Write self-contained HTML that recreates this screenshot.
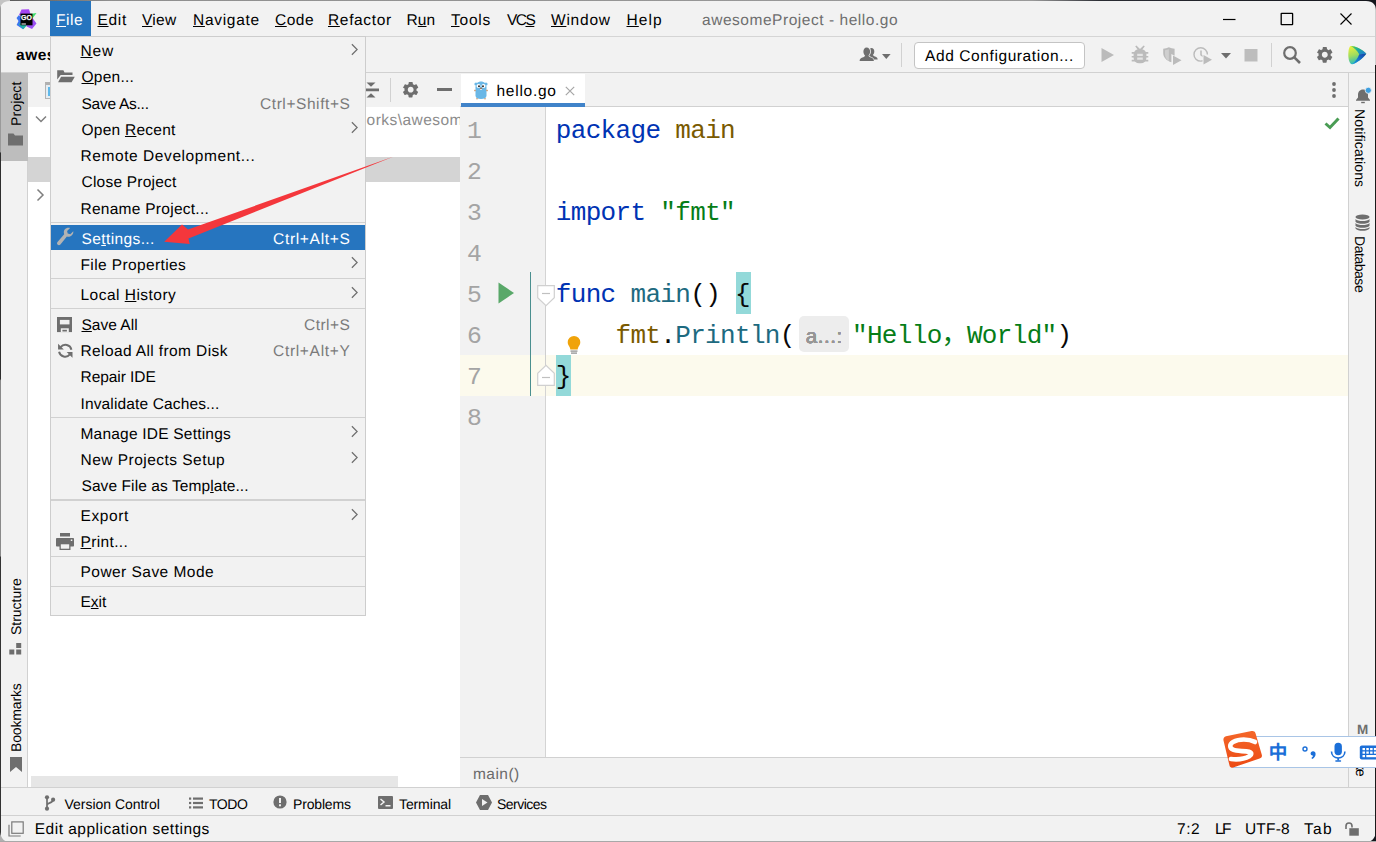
<!DOCTYPE html>
<html><head><meta charset="utf-8">
<style>
*{box-sizing:border-box;margin:0;padding:0}
html,body{width:1376px;height:842px;overflow:hidden;background:#f2f2f2}
body{font-family:"Liberation Sans","Noto Sans CJK SC",sans-serif;font-size:15.5px;color:#000;position:relative}
.abs{position:absolute}
svg{position:absolute;overflow:visible}
u{text-decoration:underline;text-underline-offset:1px;text-decoration-thickness:1px}
.t{position:absolute;line-height:20px;white-space:nowrap;text-rendering:geometricPrecision}
#menubar{left:0;top:0;width:1376px;height:37px;background:#f2f2f2;border-bottom:1px solid #d5d5d5}
#filehl{left:50px;top:1px;width:41px;height:35px;background:#2675bf}
#toolbar{left:0;top:37px;width:1376px;height:36px;background:#f2f2f2;border-bottom:1px solid #d1d1d1}
#leftstrip{left:0;top:73px;width:28px;height:714px;background:#f2f2f2;border-right:1px solid #d1d1d1}
#projtab{left:1px;top:73px;width:27px;height:88px;background:#bdbdbd}
#rightstrip{left:1348px;top:73px;width:28px;height:714px;background:#f2f2f2;border-left:1px solid #d1d1d1}
#project{left:28px;top:73px;width:432px;height:714px;background:#fff}
#projhead{left:28px;top:73px;width:432px;height:34px;background:#f2f2f2}
#projsel{left:28px;top:157px;width:432px;height:25px;background:#d4d4d4}
#hscroll{left:31px;top:776px;width:367px;height:11px;background:#e6e6e6}
#tabs{left:460px;top:73px;width:888px;height:34px;background:#f2f2f2;border-bottom:1px solid #d1d1d1}
#tab{left:461px;top:74px;width:124px;height:33px;background:#fff;border-bottom:4px solid #4083c9}
#editor{left:461px;top:107px;width:887px;height:651px;background:#fff}
#curline{left:461px;top:355px;width:887px;height:41px;background:#fcfaed}
#gutter{left:460px;top:107px;width:86px;height:651px;background:#f2f2f2;border-right:1px solid #d4d4d4}
#crumb{left:460px;top:757px;width:888px;height:30px;background:#f2f2f2;border-top:1px solid #d1d1d1}
#bottomstrip{left:0;top:787px;width:1376px;height:28px;background:#f2f2f2;border-top:1px solid #d1d1d1}
#status{left:0;top:815px;width:1376px;height:27px;background:#f2f2f2;border-top:1px solid #d1d1d1}
.code{position:absolute;left:555.8px;font-family:"Liberation Mono","Noto Sans CJK SC",monospace;font-size:26px;letter-spacing:-0.67px;line-height:41px;white-space:pre;color:#080808}
.ln{position:absolute;left:467px;font-family:"Liberation Mono",monospace;font-size:24.7px;line-height:41px;color:#a4a4a4}
.kw{color:#0033b3}.pk{color:#7a5a00}.st{color:#067d17}.fn{color:#1d6a80}
.bh{background:#93d9d9}
#menu{left:50px;top:36px;width:316px;height:579.70px;background:#f2f2f2;border:1px solid #cdcdcd}
#menu .it{position:absolute;left:0;width:314px;height:26.25px}
#menu .sep{position:absolute;left:0;width:314px;height:1.3px;background:#d1d1d1}
#menu .it.sel{background:#2675bf;height:25px}
#menu .arr{left:300px;top:5px;width:7px;height:13px}
.vt{position:absolute;white-space:nowrap;font-size:14px;line-height:16px;transform-origin:0 0}
</style></head><body>
<div class="abs" id="menubar"></div>
<div class="abs" id="filehl"></div>
<div class="abs" id="toolbar"></div>
<div class="abs" id="project"></div>
<div class="abs" id="projhead"></div>
<div class="abs" id="projsel"></div>
<div class="abs" id="hscroll"></div>
<div class="abs" id="leftstrip"></div>
<div class="abs" id="projtab"></div>
<div class="abs" id="rightstrip"></div>
<div class="abs" id="tabs"></div>
<div class="abs" id="tab"></div>
<div class="abs" id="editor"></div>
<div class="abs" id="curline"></div>
<div class="abs" id="gutter"></div>
<div class="abs" id="curline2" style="left:460px;top:355px;width:85px;height:41px;background:#fcfaed"></div>
<div class="abs" id="crumb"></div>
<div class="abs" id="bottomstrip"></div>
<div class="abs" id="status"></div>
<!--EDITOR-->
<div class="ln" style="top:111.3px">1</div>
<div class="ln" style="top:152.3px">2</div>
<div class="ln" style="top:193.3px">3</div>
<div class="ln" style="top:234.3px">4</div>
<div class="ln" style="top:275.3px">5</div>
<div class="ln" style="top:316.3px">6</div>
<div class="ln" style="top:357.3px">7</div>
<div class="ln" style="top:398.3px">8</div>
<div class="abs bh" style="left:736px;top:272px;width:15px;height:42px"></div>
<div class="abs bh" style="left:556px;top:355px;width:15px;height:41px"></div>
<div class="code" style="top:111.1px"><span class="kw">package</span> <span class="pk">main</span></div>
<div class="code" style="top:193.1px"><span class="kw">import</span> <span class="st">"fmt"</span></div>
<div class="code" style="top:275.1px"><span class="kw">func</span> <span class="fn">main</span>() {</div>
<div class="code" style="top:316.1px;left:615.5px"><span class="pk">fmt</span>.<span class="fn">Println</span>(</div>
<div class="abs" style="left:798.5px;top:316px;width:50px;height:36px;background:#ededed;border-radius:5px"></div>
<div class="code" style="top:316.1px;left:852px"><span class="st">"Hello，World"</span>)</div>
<div class="code" style="top:357.1px">}</div>
<!-- window frame bits -->
<div class="abs" style="left:0;top:0;width:1376px;height:1px;background:linear-gradient(90deg,#555 0,#8f8f8f 8%,#9a9a9a 75%,#2a2c33 80%,#14161c 100%)"></div>
<div class="abs" style="left:0;top:0;width:1px;height:842px;background:linear-gradient(180deg,#9a9a9a 0,#9a9a9a 18%,#2e2e2e 18.200%,#2e2e2e 45%,#8a8a8a 45.200%,#8a8a8a 66%,#333 66.200%,#333 100%)"></div>
<div class="abs" style="left:1375px;top:0;width:1px;height:842px;background:linear-gradient(180deg,#cfcfcf 0,#cfcfcf 65px,#1a1a1a 65px,#1a1a1a 100%)"></div>
<svg style="left:1366px;top:0" width="10" height="10" viewBox="0 0 10 10"><path d="M0 0h10v10c0-5-3-9-10-9z" fill="#14161c"/></svg>
<svg style="left:0;top:0" width="10" height="10" viewBox="0 0 10 10"><path d="M10 0h-10v10c0-5 3-9 10-9z" fill="#c4c4c4"/></svg>
<svg style="left:0;top:832px" width="10" height="10" viewBox="0 0 10 10"><path d="M0 0v10h10c-5 0-9-3-10-10z" fill="#b0b0b0"/></svg>
<svg style="left:1366px;top:832px" width="10" height="10" viewBox="0 0 10 10"><path d="M10 0v10h-10c5 0 9-3 10-10z" fill="#14161c"/></svg>
<div class="abs" style="left:0;top:841px;width:1376px;height:1px;background:#a8a8a8"></div>
<!-- GoLand logo -->
<svg style="left:15.5px;top:8.5px" width="21" height="21" viewBox="0 0 21 21">
<polygon points="5.5,0.5 13,0.3 14.5,5 9,8 3,6" fill="#a445f2"/>
<polygon points="3,6 0.5,9 2.5,12 0.6,16 7,20.2 10,16 6,10" fill="#3d74f0"/>
<polygon points="14,5 20.5,4 16.5,9.5 13,9" fill="#3fe06a"/>
<polygon points="16.5,9 20.5,14.5 16,20 10.5,17.5 12,10" fill="#9b52f3"/>
<polygon points="2.5,15 7.5,20.3 11,16 7,13" fill="#1fb3a3"/>
<rect x="4.5" y="4.6" width="12" height="11.7" fill="#000"/>
<rect x="5.500" y="14.500" width="4.400" height="1" fill="#fff"/>
<text x="5.100" y="10.500" font-family="Liberation Sans,sans-serif" font-weight="700" font-size="6.800" fill="#fff" stroke="#fff" stroke-width=".25" textLength="10.800" lengthAdjust="spacingAndGlyphs">GO</text>
</svg>
<!-- window controls -->
<svg style="left:1224px;top:12px" width="130" height="14" viewBox="0 0 130 14">
<path d="M-1 7.500H11.500" stroke="#000" stroke-width="1.200" fill="none"/>
<rect x="57.200" y="1.300" width="11.400" height="11.400" rx=".4" stroke="#000" stroke-width="1.300" fill="none"/>
<path d="M116.5 1.5 L127.5 12.5 M127.5 1.5 L116.5 12.5" stroke="#000" stroke-width="1.1" fill="none"/>
</svg>
<!-- toolbar: user icon -->
<svg style="left:859px;top:46px" width="33" height="18" viewBox="0 0 33 18">
<path d="M7.5 1.5c2.3 0 3.6 1.8 3.6 4 0 1.700-.7 3.100-1.600 3.900.2 1.100 1.200 1.600 2.600 2.100 1.700.6 2.600 1.300 2.800 3.500H.6c.2-2.200 1.100-2.900 2.800-3.500 1.400-.5 2.400-1 2.600-2.100C5.100 8.600 4.400 7.200 4.400 5.500c0-2.200 1.300-4 3.100-4z" fill="#6e6e6e"/>
<path d="M12.300 2c1.900 0 3 1.500 3 3.400 0 1.400-.6 2.600-1.400 3.300.2.900 1 1.400 2.200 1.800 1.500.5 2.400 1.100 2.600 3h-3.600c-.5-1.600-1.600-2.200-3.200-2.800-.9-.3-1.500-.6-1.700-1.100 1.100-1 1.700-2.500 1.700-4.200 0-1.100-.3-2.100-.8-2.900.4-.3.800-.5 1.200-.5z" fill="#6e6e6e"/>
<path d="M23 8 h8.600 l-4.300 5z" fill="#6e6e6e"/>
</svg>
<div class="abs" style="left:901px;top:43px;width:1px;height:24px;background:#d1d1d1"></div>
<div class="abs" style="left:914px;top:41.500px;width:170.500px;height:27px;background:#fff;border:1px solid #c4c4c4;border-radius:4px"></div>
<!-- run -->
<svg style="left:1100px;top:44px" width="170" height="22" viewBox="0 0 170 22">
<path d="M1.5 4 L14 11 L1.5 18z" fill="#bbb"/>
<!-- bug -->
<g fill="#bbb"><path d="M35.200 2.300l1.200-.8 3.600 3.600 3.600-3.600 1.200.8-2.600 3.400h-4.400z"/><rect x="33.600" y="5" width="12.800" height="14.300" rx="5.500"/>
<path d="M31.700 8h16.600v1.700h-16.600zM31.700 11.900h16.600v1.700h-16.600zM31.700 15.800h16.600v1.700h-16.600z"/></g>
<path d="M37.200 9.700h5.600v2.200h-5.600zM37.200 13.600h5.600v2.200h-5.600z" fill="#e4e4e4"/>
<!-- coverage -->
<g fill="#bbb"><path d="M63.200 4.800c2-.2 4-.8 5.700-1.600 1.700.8 3.700 1.400 5.700 1.600v7l-3.200-1.800v8.300c-4.500-1.500-8.200-4.600-8.200-9.300z"/><path d="M73 11.500l8.500 4.700-8.500 4.700z"/></g>
<path d="M68.900 5.300v11.500c-2.300-1.300-3.900-3.500-3.900-6.800v-3.700c1.400-.2 2.700-.5 3.900-1z" fill="#cfcfcf"/>
<!-- profiler -->
<g><circle cx="100.700" cy="10.400" r="6.700" fill="none" stroke="#bbb" stroke-width="1.400"/><path d="M101 6.500v4.300l2.600 2" stroke="#bbb" stroke-width="1.500" fill="none"/><rect x="102.500" y="10.500" width="10" height="11" fill="#f2f2f2"/><path d="M103.500 11l8.500 4.800-8.500 4.800z" fill="#bbb"/></g>
<path d="M121 9h10l-5 5.500z" fill="#6e6e6e"/>
<rect x="144.500" y="5" width="13" height="12.500" fill="#bdbdbd"/>
</svg>
<div class="abs" style="left:1271px;top:43px;width:1px;height:24px;background:#d1d1d1"></div>
<!-- search -->
<svg style="left:1282px;top:45px" width="20" height="20" viewBox="0 0 20 20"><circle cx="8" cy="8" r="5.800" fill="none" stroke="#6e6e6e" stroke-width="2.200"/><path d="M12.300 12.300L18 18" stroke="#6e6e6e" stroke-width="2.600"/></svg>
<!-- gear (toolbar) -->
<svg style="left:1315.200px;top:45.200px" width="19.600" height="19.600" viewBox="0 0 24 24"><path fill="#6e6e6e" d="M19.140 12.940c.04-.3.060-.61.060-.94 0-.32-.02-.64-.07-.94l2.030-1.580a.49.49 0 0 0 .12-.61l-1.920-3.320a.488.488 0 0 0-.59-.22l-2.390.96c-.5-.38-1.030-.7-1.620-.94l-.36-2.540a.484.484 0 0 0-.48-.41h-3.840c-.24 0-.43.170-.47.410l-.36 2.540c-.59.240-1.130.57-1.620.94l-2.390-.96c-.22-.08-.47 0-.59.220L2.740 8.870c-.12.210-.8.470.12.610l2.030 1.580c-.5.300-.9.630-.9.940s.2.640.7.940l-2.030 1.580a.49.49 0 0 0-.12.610l1.920 3.320c.12.220.37.290.59.220l2.390-.96c.5.380 1.030.7 1.620.94l.36 2.540c.5.240.24.410.48.410h3.840c.24 0 .44-.17.470-.41l.36-2.540c.59-.24 1.130-.56 1.620-.94l2.390.96c.22.080.47 0 .59-.22l1.920-3.320c.12-.22.070-.47-.12-.61l-2.010-1.580zM12 15.600c-1.980 0-3.600-1.620-3.600-3.600s1.620-3.600 3.600-3.600 3.600 1.620 3.600 3.600-1.620 3.600-3.600 3.600z"/></svg>
<!-- toolbox logo -->
<svg style="left:1347.500px;top:45px" width="19" height="20" viewBox="0 0 19 20">
<defs><linearGradient id="tg1" x1="0" y1="0" x2=".3" y2="1"><stop offset="0" stop-color="#f6f13a"/><stop offset=".55" stop-color="#9fdc5e"/><stop offset="1" stop-color="#22b8c4"/></linearGradient>
<linearGradient id="tg2" x1="0" y1="0" x2="1" y2=".6"><stop offset="0" stop-color="#5fd24a"/><stop offset=".5" stop-color="#1fae9a"/><stop offset="1" stop-color="#1c84cc"/></linearGradient>
<linearGradient id="tg3" x1="0" y1="1" x2="1" y2="0"><stop offset="0" stop-color="#1ba0dc"/><stop offset=".6" stop-color="#1565c4"/><stop offset="1" stop-color="#173fa4"/></linearGradient></defs>
<path d="M2.800 1C7 1 15 4.500 18.300 8.800 15 13.500 8 18.500 4.200 19.200 1.500 19.500.3 14 .3 10 .3 6 1 1.200 2.800 1z" fill="url(#tg1)"/>
<path d="M2.800 1C7 1 15 4.500 18.300 8.800L11.200 9.300C9.500 6 6 2.500 2.800 1z" fill="url(#tg2)"/>
<path d="M11.200 9.300L18.300 8.800C15 13.500 8 18.500 4.200 19.200 7.500 16.500 10 13 11.200 9.300z" fill="url(#tg3)"/>
</svg>
<!-- project header icons -->
<div class="abs" style="left:45px;top:82.300px;width:16px;height:16.400px;border:1px solid #b3b3b3;border-top:3px solid #b0b0b0;background:#e4edf3"></div><div class="abs" style="left:47.700px;top:86.700px;width:8px;height:9.500px;background:#5fb8ea"></div>
<svg style="left:363px;top:82px" width="16" height="16" viewBox="0 0 16 16"><path d="M3.500 .5h9l-4.500 4.300zM0 6.600h16v2.600h-16zM3.500 15.600h9l-4.500-4.300z" fill="#6e6e6e"/></svg>
<div class="abs" style="left:390px;top:78px;width:1px;height:24px;background:#d1d1d1"></div>
<svg style="left:401.300px;top:80.300px" width="19.400" height="19.400" viewBox="0 0 24 24"><path fill="#6e6e6e" d="M19.140 12.940c.04-.3.060-.61.060-.94 0-.32-.02-.64-.07-.94l2.030-1.580a.49.49 0 0 0 .12-.61l-1.920-3.320a.488.488 0 0 0-.59-.22l-2.390.96c-.5-.38-1.030-.7-1.620-.94l-.36-2.540a.484.484 0 0 0-.48-.41h-3.840c-.24 0-.43.170-.47.410l-.36 2.540c-.59.240-1.130.57-1.620.94l-2.390-.96c-.22-.08-.47 0-.59.220L2.740 8.870c-.12.210-.8.470.12.610l2.030 1.580c-.5.300-.9.630-.9.940s.2.640.7.940l-2.030 1.580a.49.49 0 0 0-.12.610l1.920 3.320c.12.220.37.290.59.220l2.390-.96c.5.380 1.030.7 1.620.94l.36 2.540c.5.240.24.410.48.410h3.840c.24 0 .44-.17.470-.41l.36-2.540c.59-.24 1.130-.56 1.620-.94l2.390.96c.22.080.47 0 .59-.22l1.920-3.320c.12-.22.070-.47-.12-.61l-2.010-1.580zM12 15.600c-1.980 0-3.600-1.620-3.600-3.600s1.620-3.600 3.600-3.600 3.600 1.620 3.600 3.600-1.620 3.600-3.600 3.600z"/></svg>
<div class="abs" style="left:437px;top:88.300px;width:15px;height:2.800px;background:#6e6e6e"></div>
<!-- tree chevrons -->
<svg style="left:35px;top:114px" width="12" height="10" viewBox="0 0 12 10"><path d="M1 2.500l5 5 5-5" fill="none" stroke="#7f7f7f" stroke-width="1.500"/></svg>
<svg style="left:36px;top:188px" width="9" height="14" viewBox="0 0 9 14"><path d="M1.500 1.500l5.500 5.500-5.500 5.500" fill="none" stroke="#7f7f7f" stroke-width="1.500"/></svg>
<!-- tab icons -->
<svg style="left:474px;top:80.500px" width="14" height="18.500" viewBox="0 0 14 18.500">
<ellipse cx="2" cy="3" rx="1.600" ry="1.600" fill="#6ab7e6"/><ellipse cx="12" cy="3" rx="1.600" ry="1.600" fill="#6ab7e6"/>
<path d="M1.500 6.500c0-4 2.500-6 5.500-6s5.500 2 5.500 6v8c0 2.500-2 3.500-5.500 3.500s-5.500-1-5.500-3.500z" fill="#6ab7e6"/>
<circle cx="4.500" cy="5" r="2" fill="#fff"/><circle cx="9.500" cy="5" r="2" fill="#fff"/><circle cx="5" cy="5.300" r=".95" fill="#1e1e1e"/><circle cx="9" cy="5.300" r=".95" fill="#1e1e1e"/>
<ellipse cx="7" cy="7.400" rx="1.200" ry=".9" fill="#9a7860"/><rect x="6.300" y="8" width="1.400" height="1" fill="#fff"/>
<rect x=".2" y="8.800" width="1.600" height="1.400" fill="#c99a72"/><rect x="12.200" y="8.800" width="1.600" height="1.400" fill="#c99a72"/><rect x="2.200" y="17.200" width="1.600" height="1.100" fill="#c99a72"/><rect x="10.200" y="17.200" width="1.600" height="1.100" fill="#c99a72"/>
</svg>
<svg style="left:565px;top:85.500px" width="10" height="10" viewBox="0 0 10 10"><path d="M.8.800l8.400 8.400M9.200.8L.8 9.200" stroke="#a6a6a6" stroke-width="1.200"/></svg>
<!-- three dots -->
<svg style="left:1331px;top:81px" width="6" height="18" viewBox="0 0 6 18"><circle cx="3" cy="3" r="1.900" fill="#6e6e6e"/><circle cx="3" cy="9" r="1.900" fill="#6e6e6e"/><circle cx="3" cy="15" r="1.900" fill="#6e6e6e"/></svg>
<!-- check -->
<svg style="left:1324px;top:117px" width="16" height="13" viewBox="0 0 16 13"><path d="M1.500 6.500l4.500 4 8.500-9" fill="none" stroke="#499c54" stroke-width="3"/></svg>
<!-- gutter -->
<div class="abs" style="left:530px;top:272px;width:1px;height:124px;background:#4a8f8f"></div>
<svg style="left:497.500px;top:282px" width="17" height="22" viewBox="0 0 17 22"><path d="M.5.500l15.500 10.500-15.500 10.500z" fill="#59a869"/></svg>
<div class="abs" style="left:545px;top:295px;width:1px;height:80px;background:#cfcfcf"></div>
<svg style="left:536.500px;top:285px" width="18" height="22" viewBox="0 0 18 22"><path d="M.7.700h16.600v12l-8.300 8-8.300-8z" fill="#fff" stroke="#d0d0d0" stroke-width="1.200"/><path d="M5 8.500h8" stroke="#c0c0c0" stroke-width="1.200"/></svg>
<svg style="left:536.500px;top:364px" width="18" height="22" viewBox="0 0 18 22"><path d="M.7 21.300h16.600v-12l-8.300-8-8.300 8z" fill="#fff" stroke="#d0d0d0" stroke-width="1.200"/><path d="M5 13.500h8" stroke="#c0c0c0" stroke-width="1.200"/></svg>
<!-- bulb -->
<svg style="left:567px;top:336px" width="14" height="19" viewBox="0 0 14 19"><path d="M7 0a6.300 6.300 0 0 1 6.300 6.300c0 2.500-1.500 3.800-2.300 5.700-.2.600-.3 1.500-.3 1.500h-7.400s-.1-.9-.3-1.500c-.8-1.900-2.300-3.200-2.300-5.700a6.300 6.300 0 0 1 6.300-6.300z" fill="#f0a30a"/><rect x="3.500" y="14.500" width="7" height="1.200" fill="#8a8a8a"/><rect x="4" y="16.500" width="6" height="1.200" fill="#8a8a8a"/></svg>
<!-- right strip -->
<svg style="left:1355.500px;top:85px" width="17" height="19" viewBox="0 0 17 19"><path d="M7 4.500c3.200 0 5 2.300 5 5.200v2.800l2 2.500v.8h-14v-.8l2-2.500v-2.800c0-2.900 1.800-5.200 5-5.200z" fill="#6e6e6e"/><rect x="5.200" y="16.800" width="3.600" height="1.400" fill="#6e6e6e"/><circle cx="12.300" cy="5.300" r="3.100" fill="#3d9fe0" stroke="#f2f2f2" stroke-width=".8"/></svg>
<svg style="left:1355px;top:214px" width="15" height="17" viewBox="0 0 15 17"><g fill="#6e6e6e"><ellipse cx="7.500" cy="3" rx="7" ry="2.600"/><path d="M.5 5c1 1.500 4 2 7 2s6-.5 7-2v2.800c-1 1.500-4 2-7 2s-6-.5-7-2z"/><path d="M.5 9c1 1.500 4 2 7 2s6-.5 7-2v2.800c-1 1.500-4 2-7 2s-6-.5-7-2z"/><path d="M.5 13c1 1.500 4 2 7 2s6-.5 7-2v1.500c-1 1.500-4 2.300-7 2.300s-6-.8-7-2.300z"/></g></svg>

<div class="abs" style="left:28px;top:107px;width:432px;height:60px;overflow:hidden"><div style="position:absolute;left:-28px;top:-107px"><span class="t" style="left:366.60px;top:111.00px;font-size:15.5px;letter-spacing:0.451px;color:#8c8c8c;">orks\awesom</span>
<span class="t" style="left:317.00px;top:111.00px;font-size:15.5px;letter-spacing:-1.397px;color:#8c8c8c;">D:\GoW</span></div></div>
<span class="t" style="left:16.00px;top:46.00px;font-size:15.5px;letter-spacing:0.525px;color:#000;font-weight:700;">awesomeProject</span>
<span class="t" style="left:5.90px;top:126.00px;transform:rotate(-90deg);transform-origin:0 0;font-size:14px;letter-spacing:0.136px;color:#000;">Project</span>
<span class="t" style="left:5.90px;top:635.30px;transform:rotate(-90deg);transform-origin:0 0;font-size:14px;letter-spacing:-0.014px;color:#000;">Structure</span>
<span class="t" style="left:5.90px;top:751.80px;transform:rotate(-90deg);transform-origin:0 0;font-size:14px;letter-spacing:-0.153px;color:#000;">Bookmarks</span>
<span class="t" style="left:1370.40px;top:108.90px;transform:rotate(90deg);transform-origin:0 0;font-size:14px;letter-spacing:0.154px;color:#000;">Notifications</span>
<span class="t" style="left:1370.40px;top:236.00px;transform:rotate(90deg);transform-origin:0 0;font-size:14px;letter-spacing:-0.464px;color:#000;">Database</span>
<span class="t" style="left:1357.00px;top:720.00px;font-size:13.5px;letter-spacing:0.000px;color:#6e6e6e;font-weight:700;">M</span>
<span class="t" style="left:1370.60px;top:746.00px;transform:rotate(90deg);transform-origin:0 0;font-size:14px;letter-spacing:-1.249px;color:#000;">make</span>
<!--MENU-->
<div class="abs" id="menu">
<div class="it" style="top:0.60px"><svg class="arr" viewBox="0 0 8 14"><path d="M1 1 L7 7 L1 13" fill="none" stroke="#6e6e6e" stroke-width="1.4"/></svg></div>
<div class="it" style="top:26.85px"></div>
<div class="it" style="top:53.10px"></div>
<div class="it" style="top:79.35px"><svg class="arr" viewBox="0 0 8 14"><path d="M1 1 L7 7 L1 13" fill="none" stroke="#6e6e6e" stroke-width="1.4"/></svg></div>
<div class="it" style="top:105.60px"></div>
<div class="it" style="top:131.85px"></div>
<div class="it" style="top:158.10px"></div>
<div class="sep" style="top:184.95px"></div>
<div class="it sel" style="top:188.10px"></div>
<div class="it" style="top:214.35px"><svg class="arr" viewBox="0 0 8 14"><path d="M1 1 L7 7 L1 13" fill="none" stroke="#6e6e6e" stroke-width="1.4"/></svg></div>
<div class="sep" style="top:241.20px"></div>
<div class="it" style="top:244.35px"><svg class="arr" viewBox="0 0 8 14"><path d="M1 1 L7 7 L1 13" fill="none" stroke="#6e6e6e" stroke-width="1.4"/></svg></div>
<div class="sep" style="top:271.20px"></div>
<div class="it" style="top:274.35px"></div>
<div class="it" style="top:300.60px"></div>
<div class="it" style="top:326.85px"></div>
<div class="it" style="top:353.10px"></div>
<div class="sep" style="top:379.95px"></div>
<div class="it" style="top:383.10px"><svg class="arr" viewBox="0 0 8 14"><path d="M1 1 L7 7 L1 13" fill="none" stroke="#6e6e6e" stroke-width="1.4"/></svg></div>
<div class="it" style="top:409.35px"><svg class="arr" viewBox="0 0 8 14"><path d="M1 1 L7 7 L1 13" fill="none" stroke="#6e6e6e" stroke-width="1.4"/></svg></div>
<div class="it" style="top:435.60px"></div>
<div class="sep" style="top:462.45px"></div>
<div class="it" style="top:465.60px"><svg class="arr" viewBox="0 0 8 14"><path d="M1 1 L7 7 L1 13" fill="none" stroke="#6e6e6e" stroke-width="1.4"/></svg></div>
<div class="it" style="top:491.15px"></div>
<div class="sep" style="top:519.00px"></div>
<div class="it" style="top:521.15px"></div>
<div class="sep" style="top:549.00px"></div>
<div class="it" style="top:551.15px"></div>

</div>
<!-- left strip icons -->
<svg style="left:8px;top:133px" width="15" height="13" viewBox="0 0 15 13"><path d="M0 .5h5.500l1.500 2h8v10h-15z" fill="#6e6e6e"/></svg>
<svg style="left:9px;top:643px" width="13" height="12" viewBox="0 0 13 12"><rect x="7.200" y="0" width="5" height="5" fill="#6e6e6e"/><rect x=".3" y="6.500" width="5" height="5" fill="#6e6e6e"/><rect x="7.200" y="6.500" width="5" height="5" fill="#6e6e6e"/></svg>
<svg style="left:9.500px;top:756.500px" width="12" height="15" viewBox="0 0 12 15"><path d="M0 0h12v15l-6-5-6 5z" fill="#6e6e6e"/></svg>
<!-- bottom strip icons -->
<svg style="left:44px;top:795px" width="12" height="16" viewBox="0 0 12 16"><g fill="none" stroke="#6e6e6e" stroke-width="1.700"><path d="M3 2.300v11.400M3 10.200c.3-2.800 6-1.800 6.100-5.500"/></g><circle cx="3" cy="2.300" r="2.100" fill="#6e6e6e"/><circle cx="9.100" cy="4.700" r="2.100" fill="#6e6e6e"/><circle cx="3" cy="13.700" r="2.100" fill="#6e6e6e"/></svg>
<svg style="left:189px;top:797px" width="14" height="12" viewBox="0 0 14 12"><g fill="#6e6e6e"><rect x="0" y=".5" width="2.200" height="2.200"/><rect x="4" y=".5" width="10" height="2.200"/><rect x="0" y="4.900" width="2.200" height="2.200"/><rect x="4" y="4.900" width="10" height="2.200"/><rect x="0" y="9.300" width="2.200" height="2.200"/><rect x="4" y="9.300" width="10" height="2.200"/></g></svg>
<svg style="left:273px;top:795px" width="14" height="14" viewBox="0 0 14 14"><circle cx="7" cy="7" r="6.600" fill="#6e6e6e"/><rect x="6" y="3" width="2" height="5" fill="#f2f2f2"/><rect x="6" y="9.300" width="2" height="2" fill="#f2f2f2"/></svg>
<svg style="left:378px;top:796px" width="15" height="13" viewBox="0 0 15 13"><rect x="0" y="0" width="15" height="13" rx="1" fill="#6e6e6e"/><path d="M2.500 3l3.500 3-3.500 3" stroke="#f2f2f2" stroke-width="1.500" fill="none"/><rect x="7.500" y="9" width="5" height="1.500" fill="#f2f2f2"/></svg>
<svg style="left:476px;top:795px" width="16" height="15" viewBox="0 0 16 15"><path d="M4 0h8l4 7.500-4 7.500h-8l-4-7.500z" fill="#6e6e6e"/><path d="M6 4l5.500 3.500-5.500 3.500z" fill="#f2f2f2"/></svg>
<!-- status icons -->
<svg style="left:8px;top:821px" width="16" height="16" viewBox="0 0 16 16"><rect x="3.800" y=".9" width="11.400" height="11.400" fill="none" stroke="#7a7a7a" stroke-width="1.200"/><path d="M1 3.800v11.200h11.700" fill="none" stroke="#7a7a7a" stroke-width="1.200"/></svg>
<svg style="left:1345px;top:821.500px" width="14" height="14" viewBox="0 0 14 14"><path d="M1 7v-3a3 3 0 0 1 6 0v1.500" fill="none" stroke="#6e6e6e" stroke-width="1.600"/><rect x="4.300" y="6.200" width="9.500" height="7.500" fill="#6e6e6e"/></svg>
<!-- menu icons -->
<svg style="left:57px;top:69.500px" width="18" height="13" viewBox="0 0 18 13"><path d="M.2.300h6.200l1.100 2.300h8v2.300h-11.800l-3.500 4.700z" fill="#6e6e6e"/><path d="M4.100 6.700h13.700l-3.200 5.500h-13.500z" fill="#6e6e6e"/></svg>
<svg style="left:56.500px;top:228px" width="17" height="18" viewBox="0 0 17 18"><path d="M16.300 3.200l-3 3-2.600-.6-.6-2.600 3-3c-2-.6-4.200 0-5.400 1.600-1 1.400-1.100 3.100-.5 4.600l-6.700 7.800c-.7.800-.6 2 .2 2.700.8.700 2 .6 2.700-.2l6.500-7.900c1.600.5 3.400.1 4.700-1.100 1.400-1.300 1.900-3 1.700-4.300z" fill="#b3b3b3"/></svg>
<svg style="left:57.400px;top:316.700px" width="15" height="15.100" viewBox="0 0 15 15.100"><path d="M0 0h15v15.100h-15z" fill="#6e6e6e"/><rect x="2.900" y="2.900" width="9.600" height="4.500" fill="#f2f2f2"/><rect x="3.800" y="11.300" width="8" height="3.800" fill="#f2f2f2"/><rect x="5.400" y="12.800" width="4.500" height="1.700" fill="#6e6e6e"/></svg>
<svg style="left:57.200px;top:342.600px" width="16.500" height="15.500" viewBox="0 0 16 15"><g transform="translate(16,0) scale(-1,1)"><g fill="none" stroke="#6e6e6e" stroke-width="1.900"><path d="M2 6.500a6 6 0 0 1 10.500-2.500"/><path d="M14 8.500a6 6 0 0 1-10.500 2.500"/></g><path d="M15 .6v5.600h-5.600z" fill="#6e6e6e"/><path d="M1 14.400v-5.600h5.600z" fill="#6e6e6e"/></g></svg>
<svg style="left:56px;top:533px" width="18" height="17" viewBox="0 0 18 17"><g fill="#6e6e6e"><rect x="4" y="0" width="10" height="3.500"/><rect x="0" y="5" width="18" height="8.500" rx=".8"/><rect x="3.500" y="10" width="11" height="7"/></g><rect x="4.800" y="11.300" width="8.400" height="4.400" fill="#f2f2f2"/><rect x="14.800" y="6.500" width="1.500" height="1.500" fill="#f2f2f2"/></svg>
<!-- sogou IME -->
<div class="abs" style="left:1233px;top:736px;width:150px;height:32px;background:#fff;border:1px solid #a9c5e6"></div>
<svg style="left:1220px;top:728px" width="46" height="42" viewBox="0 0 46 42">
<defs><linearGradient id="sg" x1="0" y1="0" x2="0" y2="1"><stop offset="0" stop-color="#f4672a"/><stop offset="1" stop-color="#ec4a14"/></linearGradient></defs>
<path d="M6 8.200l25.500-5.200c2-.4 3.400.4 4 2.200l6.300 21.500c.5 1.800-.3 3.200-2.200 3.800l-26.500 9c-1.800.6-3.200-.2-3.600-2l-6-25c-.4-2 .5-3.800 2.500-4.300z" fill="url(#sg)"/>
<path transform="translate(-.87,.77) scale(1.07,1.1)" d="M33.500 12c-6-3-15-3-20.500 0-3.500 2-3.500 5.500 0 7 4 1.700 10.500.8 15 2 2.800.8 2.500 2.800.3 4-4.500 2.400-11 3.200-17.300 2.500" fill="none" stroke="#fff" stroke-width="4.300" stroke-linecap="round"/>
</svg>
<svg style="left:1300px;top:742px" width="76" height="21" viewBox="0 0 76 21">
<circle cx="5" cy="7" r="2" fill="none" stroke="#1b6fd8" stroke-width="1.400"/>
<path d="M12.200 9.500c1.800-.6 3.400.5 3.400 2.400 0 2.300-1.600 4.200-3.400 5l-.8-1c1-.7 1.600-1.400 1.700-2.300-1.500.2-2.500-.8-2.500-2 0-1 .6-1.800 1.600-2.100z" fill="#1b6fd8"/>
<rect x="34.500" y=".8" width="7.400" height="12.500" rx="3.700" fill="#1b6fd8"/>
<path d="M31.500 9.500c0 4 3 6.500 6.700 6.500s6.700-2.500 6.700-6.500" fill="none" stroke="#1b6fd8" stroke-width="1.600"/><rect x="37.300" y="16" width="1.800" height="2.500" fill="#1b6fd8"/><rect x="35.200" y="18.300" width="6" height="1.500" rx=".7" fill="#1b6fd8"/>
<rect x="59.800" y="3.500" width="20" height="14" rx="2" fill="#1b6fd8"/>
<g fill="#fff"><rect x="62.500" y="6" width="2.500" height="2.200"/><rect x="66.300" y="6" width="2.500" height="2.200"/><rect x="70.100" y="6" width="2.500" height="2.200"/><rect x="73.900" y="6" width="2.500" height="2.200"/><rect x="62.500" y="9.500" width="2.500" height="2.200"/><rect x="66.300" y="9.500" width="2.500" height="2.200"/><rect x="70.100" y="9.500" width="2.500" height="2.200"/><rect x="73.900" y="9.500" width="2.500" height="2.200"/><rect x="62.500" y="13" width="2.500" height="2.200"/><rect x="66.300" y="13" width="10" height="2.200"/></g>
</svg>
<div class="t" style="left:1268.500px;top:743.400px;font-size:19px;line-height:22px;color:#1b6fd8;font-weight:700">中</div>

<!--ARROW-->
<svg style="left:0;top:0" width="1376" height="842"><polygon points="393.8,156.6 188,229.5 182,224.5 164.2,241.7 189.7,243.9 188.5,238.5" fill="#f4373c"/></svg>
<span class="t" style="left:56.00px;top:11.00px;font-size:15.5px;letter-spacing:0.548px;color:#fff;"><u>F</u>ile</span>
<span class="t" style="left:97.50px;top:11.00px;font-size:15.5px;letter-spacing:0.699px;color:#000;"><u>E</u>dit</span>
<span class="t" style="left:142.00px;top:11.00px;font-size:15.5px;letter-spacing:0.293px;color:#000;"><u>V</u>iew</span>
<span class="t" style="left:193.00px;top:11.00px;font-size:15.5px;letter-spacing:0.706px;color:#000;"><u>N</u>avigate</span>
<span class="t" style="left:275.00px;top:11.00px;font-size:15.5px;letter-spacing:0.522px;color:#000;"><u>C</u>ode</span>
<span class="t" style="left:328.00px;top:11.00px;font-size:15.5px;letter-spacing:0.655px;color:#000;"><u>R</u>efactor</span>
<span class="t" style="left:406.50px;top:11.00px;font-size:15.5px;letter-spacing:0.093px;color:#000;">R<u>u</u>n</span>
<span class="t" style="left:451.00px;top:11.00px;font-size:15.5px;letter-spacing:0.766px;color:#000;"><u>T</u>ools</span>
<span class="t" style="left:507.00px;top:11.00px;font-size:15.5px;letter-spacing:-1.516px;color:#000;">VC<u>S</u></span>
<span class="t" style="left:551.00px;top:11.00px;font-size:15.5px;letter-spacing:0.763px;color:#000;"><u>W</u>indow</span>
<span class="t" style="left:626.50px;top:11.00px;font-size:15.5px;letter-spacing:1.081px;color:#000;"><u>H</u>elp</span>
<span class="t" style="left:702.00px;top:11.00px;font-size:15.5px;letter-spacing:0.541px;color:#6e6e6e;">awesomeProject - hello.go</span>
<span class="t" style="left:925.00px;top:47.00px;font-size:15.5px;letter-spacing:0.595px;color:#000;">Add Configuration...</span>
<span class="t" style="left:496.50px;top:82.00px;font-size:15.5px;letter-spacing:0.732px;color:#000;">hello.go</span>
<span class="t" style="left:473.00px;top:765.00px;font-size:15.5px;letter-spacing:0.448px;color:#6b6b6b;">main()</span>
<span class="t" style="left:64.60px;top:794.00px;font-size:14px;letter-spacing:-0.036px;color:#000;">Version Control</span>
<span class="t" style="left:209.00px;top:794.00px;font-size:14px;letter-spacing:-0.433px;color:#000;">TODO</span>
<span class="t" style="left:293.00px;top:794.00px;font-size:14px;letter-spacing:-0.162px;color:#000;">Problems</span>
<span class="t" style="left:399.00px;top:794.00px;font-size:14px;letter-spacing:-0.113px;color:#000;">Terminal</span>
<span class="t" style="left:497.00px;top:794.00px;font-size:14px;letter-spacing:-0.526px;color:#000;">Services</span>
<span class="t" style="left:34.80px;top:820.00px;font-size:15.5px;letter-spacing:0.488px;color:#000;">Edit application settings</span>
<span class="t" style="left:1177.00px;top:820.00px;font-size:15.5px;letter-spacing:0.537px;color:#000;">7:2</span>
<span class="t" style="left:1215.00px;top:820.00px;font-size:15.5px;letter-spacing:-1.620px;color:#000;">LF</span>
<span class="t" style="left:1245.00px;top:820.00px;font-size:15.5px;letter-spacing:0.177px;color:#000;">UTF-8</span>
<span class="t" style="left:1304.00px;top:820.00px;font-size:15.5px;letter-spacing:1.315px;color:#000;">Tab</span>
<span class="t" style="left:805.70px;top:327.00px;font-size:20.5px;letter-spacing:0.603px;color:#969696;">a...:</span>
<span class="t" style="left:805.70px;top:327.00px;font-size:20.5px;letter-spacing:0.603px;color:#969696;">a...:</span>
<span class="t" style="left:805.70px;top:327.00px;font-size:20.5px;letter-spacing:0.603px;color:#969696;">a...:</span>
<span class="t" style="left:805.70px;top:327.00px;font-size:20.5px;letter-spacing:0.603px;color:#969696;">a...:</span>
<span class="t" style="left:805.70px;top:327.00px;font-size:20.5px;letter-spacing:0.603px;color:#969696;">a...:</span>
<span class="t" style="left:805.70px;top:327.00px;font-size:20.5px;letter-spacing:0.603px;color:#969696;">a...:</span>
<span class="t" style="left:805.70px;top:327.00px;font-size:20.5px;letter-spacing:0.603px;color:#969696;">a...:</span>
<span class="t" style="left:805.70px;top:327.00px;font-size:20.5px;letter-spacing:0.603px;color:#969696;">a...:</span>
<span class="t" style="left:80.50px;top:42.00px;font-size:15.5px;letter-spacing:0.843px;color:#000;"><u>N</u>ew</span>
<span class="t" style="left:81.50px;top:68.00px;font-size:15.5px;letter-spacing:0.245px;color:#000;"><u>O</u>pen...</span>
<span class="t" style="left:81.50px;top:95.00px;font-size:15.5px;letter-spacing:-0.260px;color:#000;">Save As...</span>
<span class="t" style="left:260.00px;top:95.00px;font-size:15.5px;letter-spacing:0.571px;color:#7a7a7a;">Ctrl+Shift+S</span>
<span class="t" style="left:81.50px;top:121.00px;font-size:15.5px;letter-spacing:0.247px;color:#000;">Open <u>R</u>ecent</span>
<span class="t" style="left:80.50px;top:147.00px;font-size:15.5px;letter-spacing:0.574px;color:#000;">Remote Development...</span>
<span class="t" style="left:81.50px;top:173.00px;font-size:15.5px;letter-spacing:0.219px;color:#000;">Close Pro<u>j</u>ect</span>
<span class="t" style="left:80.50px;top:200.00px;font-size:15.5px;letter-spacing:0.266px;color:#000;">Rename Project...</span>
<span class="t" style="left:81.50px;top:230.00px;font-size:15.5px;letter-spacing:0.388px;color:#fff;">Se<u>t</u>tings...</span>
<span class="t" style="left:273.00px;top:230.00px;font-size:15.5px;letter-spacing:0.689px;color:#fff;">Ctrl+Alt+S</span>
<span class="t" style="left:80.50px;top:256.00px;font-size:15.5px;letter-spacing:0.380px;color:#000;">File Properties</span>
<span class="t" style="left:80.50px;top:286.00px;font-size:15.5px;letter-spacing:0.472px;color:#000;">Local <u>H</u>istory</span>
<span class="t" style="left:81.50px;top:316.00px;font-size:15.5px;letter-spacing:0.012px;color:#000;"><u>S</u>ave All</span>
<span class="t" style="left:304.00px;top:316.00px;font-size:15.5px;letter-spacing:0.469px;color:#7a7a7a;">Ctrl+S</span>
<span class="t" style="left:80.50px;top:342.00px;font-size:15.5px;letter-spacing:0.387px;color:#000;">Reload All from Disk</span>
<span class="t" style="left:273.00px;top:342.00px;font-size:15.5px;letter-spacing:0.689px;color:#7a7a7a;">Ctrl+Alt+Y</span>
<span class="t" style="left:80.50px;top:368.00px;font-size:15.5px;letter-spacing:-0.052px;color:#000;">Repair IDE</span>
<span class="t" style="left:80.50px;top:395.00px;font-size:15.5px;letter-spacing:0.141px;color:#000;">Invalidate Caches...</span>
<span class="t" style="left:80.50px;top:425.00px;font-size:15.5px;letter-spacing:0.210px;color:#000;">Manage IDE Settings</span>
<span class="t" style="left:80.50px;top:451.00px;font-size:15.5px;letter-spacing:0.471px;color:#000;">New Projects Setup</span>
<span class="t" style="left:81.50px;top:477.00px;font-size:15.5px;letter-spacing:0.083px;color:#000;">Save File as Temp<u>l</u>ate...</span>
<span class="t" style="left:80.50px;top:507.00px;font-size:15.5px;letter-spacing:0.602px;color:#000;">Export</span>
<span class="t" style="left:80.50px;top:533.00px;font-size:15.5px;letter-spacing:0.360px;color:#000;"><u>P</u>rint...</span>
<span class="t" style="left:80.50px;top:563.00px;font-size:15.5px;letter-spacing:0.462px;color:#000;">Power Save Mode</span>
<span class="t" style="left:80.50px;top:593.00px;font-size:15.5px;letter-spacing:-0.011px;color:#000;">E<u>x</u>it</span>
</body></html>
